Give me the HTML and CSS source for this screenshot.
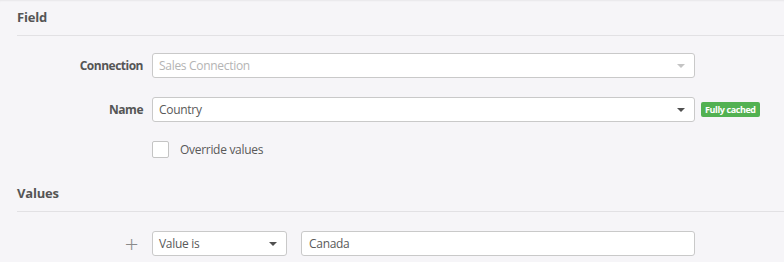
FILE: index.html
```html
<!DOCTYPE html>
<html lang="en">

<head>
    <meta charset="UTF-8">
    <meta name="viewport" content="width=device-width, initial-scale=1.0">
    <title>Field values</title>
    <link rel="stylesheet" href="styles.css">
</head>

<body>
    <div class="panel">
        <h3 class="section-title">Field</h3>
        <div class="row first">
            <label class="label">Connection</label>
            <div class="select disabled wide">
                <span class="select-text">Sales Connection</span>
                <span class="arrow"></span>
            </div>
        </div>
        <div class="row">
            <label class="label">Name</label>
            <div class="select wide">
                <span class="select-text">Country</span>
                <span class="arrow"></span>
            </div>
            <span class="badge">Fully cached</span>
        </div>
        <div class="row">
            <span class="label"></span>
            <label class="check">
                <span class="box"></span>
                <span>Override values</span>
            </label>
        </div>

        <h3 class="section-title values">Values</h3>
        <div class="row values-row">
            <span class="label plus">+</span>
            <div class="select small">
                <span class="select-text">Value is</span>
                <span class="arrow"></span>
            </div>
            <input class="text-input" type="text" value="Canada">
        </div>
    </div>
</body>

</html>
```

FILE: styles.css
```css
html {
    font-family: "Open Sans", "Noto Sans", sans-serif;
    font-size: 12px;
    color: #595959;
}

body {
    margin: 0;
    background-color: #f6f5f8;
    height: 262px;
    box-shadow: inset 0 2px 2px -1px rgba(0, 0, 0, 0.06);
}

.panel {
    padding-left: 17px;
}

.section-title {
    margin: 0;
    height: 35px;
    line-height: 35px;
    font-size: 13px;
    font-weight: 700;
    letter-spacing: -0.2px;
    color: #555555;
    border-bottom: 1px solid #e2e1e4;
}

.section-title.values {
    margin-top: 18px;
}

.row {
    display: flex;
    align-items: center;
    margin-top: 19px;
}

.row.first {
    margin-top: 17px;
}

.label {
    width: 126px;
    margin-right: 9px;
    text-align: right;
    font-weight: 700;
    letter-spacing: -0.5px;
    color: #555555;
    flex-shrink: 0;
}

.label.plus {
    width: 121px;
    margin-right: 14px;
    font-weight: 300;
    font-size: 24px;
    line-height: 25px;
    color: #8a8a8a;
    text-align: right;
}

.select {
    box-sizing: border-box;
    height: 25px;
    display: flex;
    align-items: center;
    justify-content: space-between;
    padding: 0 6px;
    background-color: #ffffff;
    border: 1px solid #c9c9c9;
    border-radius: 3px;
}

.select.wide {
    width: 543px;
}

.select.small {
    width: 135px;
    margin-right: 14px;
}

.select-text {
    letter-spacing: -0.3px;
}

.arrow {
    width: 0;
    height: 0;
    margin-right: 3px;
    border-left: 4px solid transparent;
    border-right: 4px solid transparent;
    border-top: 4px solid #505050;
}

.disabled .select-text {
    color: #b4b4b4;
}

.disabled .arrow {
    border-top-color: #c4c4c4;
}

.badge {
    margin-left: 6px;
    padding: 0 4px;
    height: 15px;
    line-height: 15px;
    background-color: #52b152;
    border-radius: 2px;
    color: #ffffff;
    font-size: 9px;
    font-weight: 700;
    letter-spacing: -0.4px;
}

.check {
    display: flex;
    align-items: center;
    letter-spacing: -0.3px;
}

.box {
    box-sizing: border-box;
    width: 17px;
    height: 17px;
    margin-right: 11px;
    background-color: #ffffff;
    border: 1px solid #c4c4c4;
    border-radius: 2px;
}

.text-input {
    box-sizing: border-box;
    width: 394px;
    height: 25px;
    margin: 0;
    padding: 0 7px;
    font-family: inherit;
    font-size: 12px;
    color: #595959;
    letter-spacing: -0.3px;
    background-color: #ffffff;
    border: 1px solid #c9c9c9;
    border-radius: 3px;
}
```
